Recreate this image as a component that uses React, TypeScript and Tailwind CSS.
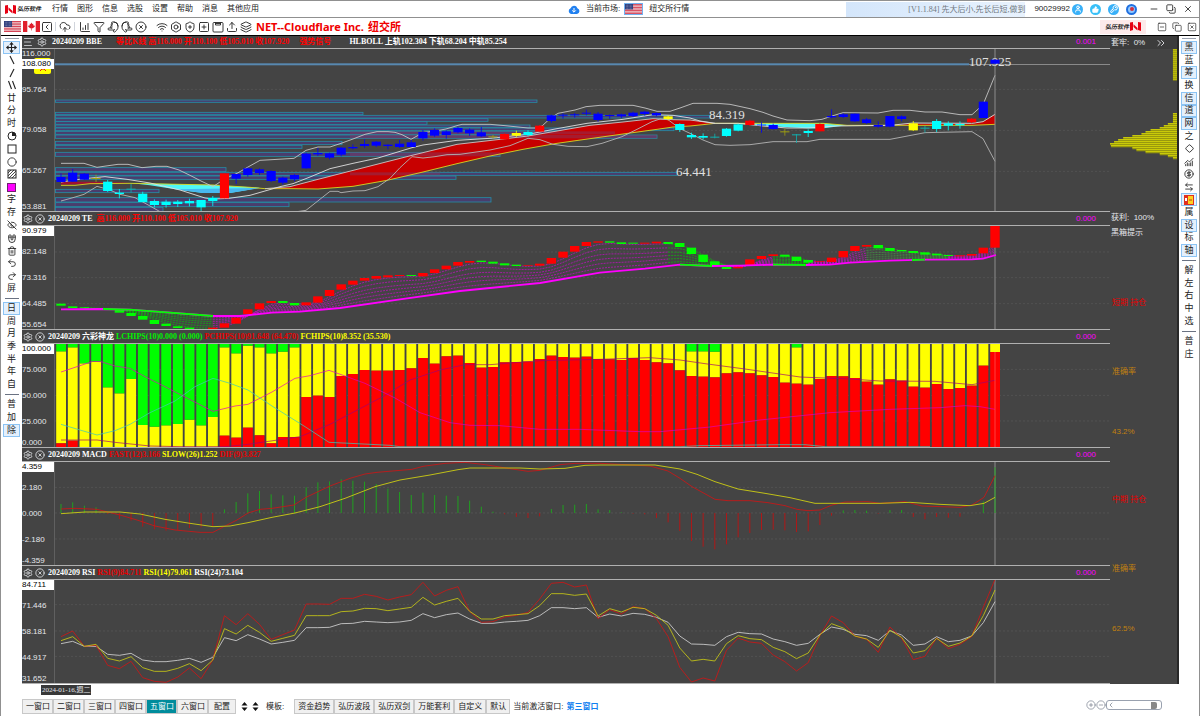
import type { ReactNode } from 'react'
import {
  Bolt, ChartColumnIncreasing, ChevronLeft, ChevronsRight, Circle, CircleDollarSign, CircleX, CloudUpload, Copy,
  Diamond, EyeOff, Funnel, Layers, Magnet, Minus, Move, Pointer, Redo2, Settings, ShieldPlus, Square, SquareChevronLeft,
  SquareMinus, SquarePlus, SquareX, TextAlignStart, Trash2, Undo2, Upload, User, Wifi, X, ChartNoAxesCombined,
  ArrowLeftRight, KeyRound, CirclePlus, CircleMinus, ThumbsUp,
} from 'lucide-react'

const STEP = 11.675
const xAt = (i: number) => 61 + i * STEP

// flat list of x, v pairs -> polyline points (three units per pixel vertically)
const pts = (list: number[]) => {
  const out: string[] = []
  for (let i = 0; i < list.length; i += 2) out.push(`${list[i]},${list[i + 1] / 3}`)
  return out.join(' ')
}
const series = (list: number[]) => list.map((v, i) => `${xAt(i)},${v / 3}`).join(' ')

const colors: Record<string, string> = { b: '#0000ff', c: '#00ffff', r: '#ff0000', y: '#ffff00', o: '#a0a010', t: '#10b0b0', g: '#00ff00' }

/* ---------- data ---------- */

// body top, body bottom, wick top, wick bottom
type Candle = [string, number, number, number, number]
const candles: Candle[] = [
  ['b', 423, 438, 412, 438], ['b', 410, 437, 399, 437], ['b', 413, 431, 411, 431], ['o', 426, 429, 416, 438],
  ['c', 437, 465, 432, 468], ['c', 470, 474, 459, 487], ['t', 458, 461, 444, 470], ['c', 473, 498, 467, 498],
  ['c', 495, 507, 490, 514], ['c', 497, 507, 491, 515], ['c', 497, 504, 492, 513], ['c', 495, 502, 488, 511],
  ['c', 492, 514, 492, 527], ['c', 486, 495, 480, 510], ['r', 412, 487, 412, 487], ['b', 414, 428, 414, 444],
  ['b', 397, 417, 395, 422], ['b', 400, 411, 397, 417], ['b', 405, 435, 403, 438], ['b', 425, 440, 422, 446],
  ['b', 417, 430, 414, 436], ['b', 353, 397, 350, 398], ['b', 351, 355, 336, 360], ['b', 352, 365, 350, 370],
  ['b', 335, 356, 333, 361], ['b', 333, 337, 325, 340], ['b', 324, 330, 310, 336], ['b', 317, 329, 315, 333],
  ['b', 326, 330, 325, 340], ['b', 323, 333, 312, 336], ['b', 319, 333, 312, 333], ['b', 288, 307, 282, 314],
  ['b', 282, 299, 277, 303], ['b', 286, 297, 283, 308], ['b', 276, 289, 273, 292], ['b', 281, 292, 277, 300],
  ['b', 289, 301, 273, 303], ['o', 301, 304, 297, 308], ['r', 294, 310, 292, 310], ['y', 291, 299, 284, 303],
  ['c', 288, 297, 283, 301], ['r', 269, 287, 267, 287], ['b', 238, 255, 236, 260], ['b', 236, 239, 232, 248],
  ['b', 235, 238, 231, 245], ['b', 230, 233, 221, 238], ['b', 233, 252, 228, 257], ['b', 237, 240, 235, 249],
  ['b', 235, 241, 233, 246], ['b', 230, 240, 227, 243], ['b', 227, 234, 224, 239], ['b', 231, 238, 229, 241],
  ['y', 241, 249, 238, 253], ['c', 264, 282, 262, 288], ['c', 297, 304, 290, 309], ['c', 300, 305, 292, 310],
  ['t', 302, 305, 293, 307], ['c', 278, 300, 276, 302], ['c', 265, 284, 263, 286], ['r', 254, 267, 251, 269],
  ['b', 266, 268, 259, 290], ['b', 267, 279, 263, 281], ['o', 286, 289, 278, 299], ['t', 295, 298, 294, 321],
  ['c', 285, 291, 280, 303], ['r', 264, 286, 262, 286], ['b', 240, 244, 220, 247], ['b', 235, 243, 232, 246],
  ['b', 233, 256, 233, 258], ['b', 250, 261, 246, 264], ['b', 267, 272, 256, 275], ['b', 240, 272, 240, 274],
  ['b', 241, 249, 238, 256], ['y', 262, 283, 255, 285], ['t', 275, 278, 270, 290], ['c', 255, 279, 249, 288],
  ['c', 262, 269, 256, 283], ['c', 264, 268, 256, 278], ['r', 248, 259, 246, 262], ['b', 197, 246, 197, 246],
  ['b', 71, 83, 71, 83],
]

// top, bottom, right edge
const priceRanges = [
  [192, 199, 537], [229, 236, 363], [238, 246, 710], [248, 256, 488], [257, 265, 427], [267, 274, 530],
  [276, 284, 674], [286, 295, 615], [297, 307, 657], [316, 326, 342], [328, 337, 302], [349, 361, 500], [395, 407, 226],
  [409, 418, 677], [420, 430, 456], [460, 470, 159], [485, 498, 491], [500, 512, 289], [514, 526, 163],
]

const upperBand = [
  61, 382, 84, 382, 97, 394, 106, 390, 118, 385, 128, 385, 142, 395, 156, 391, 167, 391, 179, 402, 190, 418, 201, 435,
  213, 452, 225, 428, 237, 412, 248, 393, 260, 373, 272, 371, 294, 367, 306, 343, 318, 333, 330, 333, 341, 322,
  353, 309, 365, 295, 377, 287, 388, 287, 395, 289, 402, 296, 411, 310, 423, 290, 435, 285, 446, 279, 458, 268,
  462, 265, 490, 265, 505, 269, 528, 276, 535, 276, 542, 270, 551, 245, 558, 232, 575, 222, 586, 212, 600, 208,
  633, 208, 645, 216, 657, 226, 670, 226, 680, 216, 693, 202, 717, 202, 730, 205, 750, 218, 763, 229, 773, 240,
  787, 252, 810, 254, 822, 250, 832, 240, 843, 230, 878, 231, 893, 223, 910, 223, 925, 228, 942, 228, 960, 236,
  972, 236, 983, 206, 995, 118,
]
const lowerBand = [
  61, 495, 73, 485, 84, 475, 97, 451, 108, 460, 120, 475, 135, 485, 147, 505, 160, 527, 297, 527, 306, 523, 330, 466,
  338, 466, 341, 470, 353, 465, 365, 464, 378, 452, 390, 427, 400, 395, 412, 362, 423, 366, 435, 362, 447, 356,
  460, 355, 490, 342, 510, 329, 528, 307, 540, 311, 553, 325, 568, 331, 587, 332, 602, 322, 622, 302, 637, 280,
  652, 257, 660, 249, 668, 251, 680, 278, 690, 292, 703, 312, 715, 326, 730, 328, 750, 326, 773, 317, 807, 317,
  820, 310, 890, 310, 925, 290, 972, 287, 983, 308, 995, 376,
]
const midBand = [
  61, 438, 84, 428, 105, 422, 127, 430, 150, 441, 180, 462, 205, 486, 213, 489, 229, 487, 250, 478, 280, 452, 293, 443,
  310, 423, 330, 398, 353, 382, 378, 366, 412, 335, 423, 327, 457, 313, 490, 307, 528, 295, 557, 278, 587, 262,
  623, 250, 653, 236, 673, 238, 690, 246, 700, 255, 715, 262, 738, 262, 763, 270, 787, 276, 808, 276, 837, 270,
  890, 268, 913, 261, 972, 262, 983, 257, 995, 235,
]
const fanTop = [
  265, 458, 290, 452, 318, 430, 412, 358, 457, 325, 503, 309, 528, 300, 557, 285, 590, 268, 623, 258, 653, 248,
  673, 251, 690, 252, 715, 262,
]
const fanBottom = [
  265, 458, 290, 458, 318, 459, 353, 451, 387, 433, 423, 408, 457, 383, 490, 360, 523, 340, 557, 322, 590, 308,
  623, 294, 657, 280, 673, 273, 690, 270, 703, 266, 715, 262,
]
const reversed = (list: number[]) => {
  const out: number[] = []
  for (let i = list.length - 2; i >= 0; i -= 2) out.push(list[i], list[i + 1])
  return out
}

const teBars: [string, number, number][] = [
  ['g', 281, 287], ['g', 289, 294], ['g', 292, 295], ['g', 294, 297], ['g', 294, 298], ['g', 298, 308], ['g', 309, 318],
  ['g', 318, 329], ['g', 330, 342], ['g', 341, 348], ['g', 349, 354], ['g', 353, 357], ['g', 357, 357], ['r', 353, 357],
  ['r', 340, 353], ['r', 323, 341], ['r', 298, 312], ['r', 280, 298], ['r', 273, 279], ['g', 273, 279], ['g', 279, 286],
  ['r', 277, 286], ['r', 259, 278], ['r', 240, 258], ['r', 223, 239], ['r', 212, 224], ['r', 204, 212], ['r', 198, 206],
  ['r', 196, 202], ['r', 195, 198], ['g', 195, 198], ['r', 189, 199], ['r', 178, 189], ['r', 167, 178], ['r', 156, 167],
  ['r', 153, 158], ['g', 152, 156], ['g', 155, 161], ['g', 160, 166], ['g', 164, 168], ['r', 166, 168], ['r', 161, 167],
  ['r', 144, 161], ['r', 125, 143], ['r', 108, 125], ['r', 96, 108], ['r', 94, 98], ['g', 94, 98], ['g', 97, 102],
  ['g', 98, 101], ['r', 98, 101], ['r', 95, 100], ['g', 96, 102], ['g', 99, 111], ['g', 113, 132], ['g', 134, 156],
  ['g', 154, 165], ['g', 171, 177], ['r', 170, 175], ['r', 148, 165], ['r', 138, 147], ['r', 133, 138], ['g', 134, 140],
  ['g', 140, 153], ['g', 150, 158], ['r', 154, 156], ['r', 143, 156], ['r', 123, 142], ['r', 108, 123], ['r', 105, 110],
  ['g', 105, 115], ['g', 114, 123], ['g', 120, 124], ['g', 123, 129], ['g', 127, 134], ['g', 131, 136], ['g', 135, 138],
  ['r', 136, 139], ['r', 132, 137], ['r', 113, 130], ['r', 48, 113],
]
const teBase = [
  61, 298, 103, 297, 130, 299, 170, 308, 213, 318, 240, 318, 272, 308, 300, 305, 340, 294, 400, 268, 460, 243, 540, 219,
  600, 188, 645, 176, 680, 164, 712, 168, 740, 167, 773, 164, 806, 165, 830, 164, 850, 158, 890, 152, 925, 149,
  972, 148, 983, 146, 996, 135,
]
const baseAt = (x: number) => {
  for (let i = 2; i < teBase.length; i += 2) {
    if (x <= teBase[i]) {
      const t = (x - teBase[i - 2]) / (teBase[i] - teBase[i - 2])
      return teBase[i - 1] + t * (teBase[i + 1] - teBase[i - 1])
    }
  }
  return teBase[teBase.length - 1]
}
const fanLine = (from: number, to: number, k: number) => {
  const out: string[] = []
  for (let i = from; i <= to; i++) {
    const lag = Math.max(0, i - 1)
    const top = (teBars[lag][1] + teBars[lag][2] + teBars[i][1] + teBars[i][2]) / 4
    const base = baseAt(xAt(i))
    out.push(`${xAt(i)},${(base + (top - base) * k) / 3}`)
  }
  return out.join(' ')
}
const fanParts: [number, number, string][] = [
  [2, 13, '#00d000'], [13, 52, '#e000e0'], [52, 57, '#00d000'], [57, 61, '#e000e0'], [61, 64, '#00d000'],
  [64, 69, '#e000e0'], [69, 76, '#40b040'], [76, 80, '#e000e0'],
]

const redTops = [
  700, 692, 711, 711, 711, 711, 711, 711, 711, 711, 711, 711, 711, 711, 677, 683, 653, 676, 700, 681, 681, 561, 557, 561,
  498, 492, 480, 482, 482, 480, 475, 444, 461, 439, 437, 459, 473, 471, 457, 456, 455, 447, 437, 441, 443, 440, 447,
  448, 450, 444, 450, 457, 460, 481, 498, 500, 502, 490, 487, 490, 496, 501, 518, 521, 524, 507, 498, 499, 504, 515,
  524, 508, 512, 530, 533, 522, 537, 534, 527, 467, 426,
]
const greenBottoms: Record<number, number> = {
  0: 424, 1: 412, 2: 460, 3: 455, 4: 532, 5: 550, 6: 507, 7: 645, 8: 650, 9: 646, 10: 642, 11: 629, 12: 646, 13: 621,
  14: 412, 15: 430, 16: 407, 17: 412, 18: 430, 19: 425, 20: 412, 54: 424, 55: 424, 56: 425, 63: 412,
}
const lChips = [
  61, 486, 73, 474, 93, 454, 101, 455, 115, 468, 130, 475, 145, 500, 165, 530, 183, 558, 213, 604, 235, 588, 248, 583,
  272, 546, 295, 505, 310, 497, 329, 481, 345, 498, 365, 520, 395, 564, 420, 608, 450, 638, 470, 646, 500, 647,
  540, 658, 580, 658, 640, 665, 660, 665, 710, 651, 760, 630, 830, 608, 890, 598, 940, 593, 965, 587, 980, 590, 995, 598,
]
const pChips = [
  61, 643, 80, 660, 97, 675, 115, 662, 130, 643, 150, 608, 175, 573, 195, 530, 213, 505, 230, 520, 248, 540, 272, 588,
  305, 650, 329, 697, 350, 700, 390, 706, 400, 710, 680, 710, 700, 707, 780, 704, 805, 704, 825, 710, 930, 710,
]
const fChips = [
  61, 690, 97, 690, 115, 697, 150, 708, 180, 710, 225, 710, 248, 703, 280, 689, 300, 680, 330, 643, 384, 558, 410, 510,
  440, 480, 465, 464, 490, 464, 540, 452, 600, 448, 650, 443, 680, 450, 705, 461, 745, 477, 800, 501, 850, 507,
  880, 513, 935, 514, 972, 524, 983, 518, 995, 511,
]

const macdBars = [
  192, 187, 197, 202, 222, 237, 242, 260, 268, 272, 270, 264, 262, 258, 208, 186, 160, 153, 163, 166, 167, 142, 127, 124,
  118, 122, 125, 132, 146, 156, 165, 158, 165, 167, 168, 182, 200, 215, 223, 231, 234, 229, 207, 195, 194, 192, 208,
  210, 217, 221, 223, 234, 247, 273, 303, 320, 328, 313, 292, 279, 270, 269, 271, 276, 274, 255, 227, 211, 210, 212,
  221, 210, 210, 231, 238, 231, 233, 230, 219, 184, 82,
]
const macdFast = [
  61, 207, 75, 205, 97, 208, 120, 225, 137, 240, 155, 258, 175, 270, 200, 277, 213, 277, 225, 258, 237, 240, 248, 219,
  260, 208, 272, 205, 294, 195, 306, 172, 330, 138, 350, 115, 365, 102, 377, 97, 412, 88, 423, 79, 445, 70, 465, 67,
  485, 74, 510, 86, 528, 94, 540, 91, 560, 74, 575, 70, 600, 70, 650, 78, 668, 93, 680, 115, 692, 140, 715, 178,
  728, 182, 750, 182, 768, 188, 785, 197, 797, 208, 808, 212, 820, 210, 832, 195, 845, 186, 868, 185, 880, 190,
  905, 185, 922, 198, 960, 202, 972, 195, 984, 172, 995, 107,
]
const macdSlow = [
  61, 221, 85, 216, 120, 216, 140, 222, 165, 238, 190, 250, 213, 260, 230, 258, 248, 248, 272, 232, 295, 219, 320, 200,
  345, 175, 375, 140, 400, 120, 430, 105, 458, 89, 470, 84, 520, 84, 540, 87, 565, 85, 585, 76, 600, 75, 655, 75,
  680, 87, 697, 103, 715, 125, 738, 147, 765, 160, 790, 173, 815, 190, 880, 190, 910, 187, 940, 193, 970, 197,
  984, 190, 995, 172,
]

const rsi24 = [
  611, 604, 619, 619, 643, 646, 640, 660, 665, 665, 661, 655, 667, 652, 593, 602, 584, 597, 612, 607, 601, 563, 563, 562,
  551, 550, 544, 546, 548, 546, 541, 521, 533, 524, 519, 537, 550, 550, 546, 544, 541, 527, 503, 503, 506, 503, 532,
  522, 528, 520, 523, 532, 547, 588, 612, 613, 616, 590, 577, 581, 582, 597, 605, 616, 610, 583, 561, 568, 583, 587,
  601, 572, 585, 616, 612, 590, 605, 601, 588, 548, 485,
]
const rsi14 = [
  602, 590, 619, 613, 655, 663, 650, 683, 694, 694, 685, 671, 692, 660, 566, 582, 556, 577, 604, 595, 586, 527, 527, 527,
  515, 513, 505, 506, 512, 507, 502, 472, 495, 484, 475, 514, 537, 537, 527, 524, 521, 497, 461, 461, 466, 462, 528,
  506, 516, 502, 506, 526, 556, 624, 663, 658, 663, 611, 587, 596, 599, 622, 635, 656, 639, 585, 551, 564, 588, 597,
  622, 571, 592, 639, 632, 595, 619, 609, 588, 527, 450,
]
const rsi9 = [
  590, 573, 619, 616, 676, 686, 664, 713, 724, 727, 711, 684, 716, 660, 527, 554, 521, 553, 598, 584, 570, 492, 492, 493,
  475, 475, 463, 469, 480, 471, 464, 427, 468, 451, 440, 514, 547, 545, 531, 526, 517, 477, 430, 427, 441, 435, 536,
  509, 522, 500, 506, 536, 590, 682, 726, 714, 723, 631, 594, 606, 610, 645, 665, 693, 668, 587, 528, 548, 588, 598,
  637, 561, 594, 659, 649, 594, 626, 613, 590, 502, 418,
]

// row top, bar width for the chip distribution at the right edge
const chipRows = [
  ...Array.from({ length: 16 }, (_, i) => [38 + i * 6, 4]),
  ...Array.from({ length: 5 }, (_, i) => [232 + i * 6, 4]),
  [262, 9], [268, 13], [274, 17], [280, 26], [286, 31], [292, 35], [298, 44], [304, 53], [310, 58], [316, 62], [322, 66],
  [328, 65], [334, 44], [340, 40], [346, 31], [352, 17], [358, 9], [364, 4],
]

/* ---------- charts ---------- */

function Grid({ rows }: { rows: number[] }) {
  return (
    <>
      {rows.map((v) => (
        <line key={v} x1="55" x2="1110" y1={v / 3} y2={v / 3} stroke="#565656" strokeDasharray="2 2" strokeWidth="0.8" />
      ))}
    </>
  )
}

function PriceChart() {
  return (
    <>
      <Grid rows={[160, 283, 406]} />
      {priceRanges.map(([top, bottom, right]) => (
        <rect key={top} x="55.5" y={top / 3} width={right - 55.5} height={(bottom - top) / 3} fill="#4c3c78" fillOpacity="0.8" stroke="#2490a8" strokeWidth="0.8" />
      ))}
      <rect x="55" y="27.3" width="914" height="2" fill="#5888b0" />
      <line x1="969" x2="1110" y1="28.5" y2="28.5" stroke="#8a8a8a" />
      <polygon points={pts([61, 437, 100, 437, 130, 440, 100, 444, 61, 446])} fill="#a01030" />
      <polygon points={pts([...fanTop, ...reversed(fanBottom)])} fill="#c80000" />
      {[[286, 295, 615], [297, 307, 657], [349, 361, 500], [409, 418, 440]].map(([top, bottom, right]) => (
        <rect key={top} x="350" y={top / 3} width={right - 350} height={(bottom - top) / 3} fill="#7c3c68" fillOpacity="0.45" />
      ))}
      <polygon points={pts([130, 441, 213, 447, 260, 455, 230, 471, 203, 471, 180, 462, 150, 448])} fill="#50f8f8" />
      <polygon points={pts([175, 460, 260, 456, 230, 471, 203, 471])} fill="#48b8f0" />
      <polygon points={pts([727, 261, 823, 262, 847, 268, 820, 278, 807, 277, 787, 274, 760, 268])} fill="#50f8f8" />
      <polygon points={pts([893, 268, 913, 263, 972, 264, 983, 257, 995, 235, 995, 266])} fill="#c80000" />
      <g fill="none" strokeWidth="0.9">
        <polyline points={pts([61, 448, 75, 448, 90, 443, 130, 442, 213, 447, 250, 454, ...fanBottom, 823, 262, 847, 268, 972, 268, 995, 265])} stroke="#d8d820" />
        <polyline points={pts(fanTop)} stroke="#c8c8c8" />
        <polyline points={pts(upperBand)} stroke="#c4c4c4" />
        <polyline points={pts(lowerBand)} stroke="#b4b4b4" />
        <polyline points={pts(midBand)} stroke="#e0e0e0" />
      </g>
      <line x1="995" x2="995" y1="13" y2="176" stroke="#8c8c8c" />
      <g fill="#e0e0e0" fontFamily="Liberation Serif, serif" fontSize="13">
        <text x="969" y="30">107.925</text>
        <text x="709" y="83">84.319</text>
        <text x="676" y="140">64.441</text>
      </g>
      {candles.map(([c, top, bottom, high, low], i) => (
        <g key={i} fill={colors[c]}>
          <rect x={xAt(i) - 0.5} y={high / 3} width="1" height={(low - high) / 3} fillOpacity="0.8" />
          <rect x={xAt(i) - 4.6} y={top / 3} width="9.2" height={(bottom - top) / 3} />
        </g>
      ))}
    </>
  )
}

function TeChart() {
  return (
    <>
      <Grid rows={[126, 203, 281]} />
      {fanParts.map(([from, to, stroke]) =>
        [0.15, 0.3, 0.45, 0.6, 0.78, 0.95].map((k) => (
          <polyline key={`${from}-${k}`} points={fanLine(from, to, k)} fill="none" stroke={stroke} strokeWidth="0.8" strokeOpacity="0.75" strokeDasharray="2 1" />
        ))
      )}
      <line x1="995" x2="995" y1="16" y2="119" stroke="#8c8c8c" />
      {teBars.map(([c, top, bottom], i) => (
        <rect key={i} x={xAt(i) - 4.7} y={top / 3} width="9.4" height={(bottom - top) / 3} fill={colors[c]} />
      ))}
      <polyline points={pts(teBase)} fill="none" stroke="#ff00ff" strokeWidth="1.8" />
      {[[103, 297, 130, 299, 170, 308, 213, 318], [680, 164, 712, 168], [773, 164, 806, 165], [912, 150, 925, 149]].map((seg) => (
        <polyline key={seg[0]} points={pts(seg)} fill="none" stroke="#00ff00" strokeWidth="1.8" />
      ))}
    </>
  )
}

function ChipsChart() {
  return (
    <>
      <Grid rows={[478, 556, 633]} />
      {redTops.map((red, i) => {
        const x = xAt(i) - 4.8
        const green = greenBottoms[i] ?? 400
        return (
          <g key={i}>
            <rect x={x} y={green / 3} width="9.8" height={(red - green) / 3} fill="#ffff00" />
            {green > 400 && <rect x={x} y="134" width="9.8" height={(green - 402) / 3} fill="#00ff00" />}
            {red < 711 && <rect x={x} y={red / 3} width="9.8" height={(711 - red) / 3} fill="#ff0000" />}
          </g>
        )
      })}
      <g fill="none" strokeWidth="0.9">
        <polyline points={pts(fChips)} stroke="#a00070" strokeOpacity="0.75" />
        <polyline points={pts(lChips)} stroke="#e000c0" strokeOpacity="0.75" />
        <polyline points={pts(pChips)} stroke="#40c8b8" strokeOpacity="0.8" />
      </g>
      <line x1="995" x2="995" y1="142" y2="237" stroke="#ff5050" strokeWidth="0.8" />
    </>
  )
}

function MacdChart() {
  return (
    <>
      <Grid rows={[142, 219, 297]} />
      <line x1="995" x2="995" y1="22" y2="125" stroke="#8c8c8c" />
      {macdBars.map((v, i) => (
        <rect key={i} x={xAt(i) - 0.5} y={Math.min(v, 219) / 3} width="1" height={Math.abs(v - 219) / 3} fill={v < 219 ? '#20a020' : '#b01818'} />
      ))}
      <polyline points={pts(macdFast)} fill="none" stroke="#c41818" strokeWidth="0.9" />
      <polyline points={pts(macdSlow)} fill="none" stroke="#c0c018" strokeWidth="1" />
    </>
  )
}

function RsiChart() {
  return (
    <>
      <Grid rows={[494, 573, 649]} />
      <line x1="995" x2="995" y1="139" y2="243" stroke="#8c8c8c" />
      <g fill="none" strokeWidth="0.9">
        <polyline points={series(rsi24)} stroke="#c8c8c8" />
        <polyline points={series(rsi9)} stroke="#c41818" />
        <polyline points={series(rsi14)} stroke="#c0c018" />
      </g>
    </>
  )
}

/* ---------- small parts ---------- */

function Logo() {
  return (
    <svg viewBox="0 0 11 9" className="h-[9px] w-[11px]" fill="#e60012" aria-hidden="true">
      <path d="M0 .5 3 0v8L0 9ZM8 0l3 .5V9L8 8ZM3.5 2.2 7.5 6v2.5L3.5 5Z" />
    </svg>
  )
}

function UsFlag() {
  return (
    <svg viewBox="0 0 19 13" preserveAspectRatio="none" className="h-full w-full" aria-hidden="true">
      <rect width="19" height="13" fill="#f4e6e8" />
      {[0, 2, 4, 6, 8, 10, 12].map((y) => <rect key={y} y={y} width="19" height="1" fill="#d0283c" />)}
      <rect width="9" height="7" fill="#2c3c7c" />
      {[1.5, 3.5, 5.5].map((y) => <path key={y} d={`M1 ${y}h7`} stroke="#fff" strokeWidth=".6" strokeDasharray=".6 1" />)}
    </svg>
  )
}

function CanadaFlag() {
  return (
    <svg viewBox="0 0 17 11" className="h-[11px] w-[17px]" aria-hidden="true">
      <rect width="17" height="11" fill="#fff" />
      <path d="M0 0h4.3v11H0zM12.7 0H17v11h-4.3zM8.5 1.5l.9 1.6 1-.4-.4 2 1-.6.9 1.5-2 1.6H8.8V9.5h-.6V7.2H7.1L5.1 5.6 6 4.100l1 .6-.4-2 1 .4Z" fill="#e0202c" />
    </svg>
  )
}

function Sep() {
  return <span className="h-[9px] w-px bg-gray-300" />
}

type RailItem = { label: string; icon?: ReactNode; active?: boolean }

function RailGroup({ items, className }: { items: RailItem[]; className: string }) {
  return (
    <div className={`flex w-full flex-col ${className}`}>
      {items.map((item) => (
        <button
          key={item.label}
          aria-label={item.label}
          className={`flex min-h-0 flex-1 items-center justify-center border text-[9px] leading-none ${item.active ? 'border-[#8cc4f4] bg-[#e4f0fc]' : 'border-transparent'}`}
        >
          {item.icon ?? item.label}
        </button>
      ))}
    </div>
  )
}

function RailLine() {
  return <div className="my-[3px] h-px w-[14px] shrink-0 bg-gray-500" />
}

const rail = { size: 10, strokeWidth: 2 }
const stroke = (d: string) => (
  <svg viewBox="0 0 10 10" className="h-[10px] w-[10px]" fill="none" stroke="currentColor" strokeWidth="1.100">
    <path d={d} />
  </svg>
)

const drawTools: RailItem[] = [
  { label: '移动', icon: <Move size={11} strokeWidth={2.4} />, active: true },
  { label: '直线', icon: stroke('M3 1l4 8') },
  { label: '射线', icon: stroke('M7 1L3 9') },
  { label: '平行线', icon: stroke('M1.500 1l3 8M5.500 1l3 8') },
  { label: '廿' }, { label: '分' }, { label: '时' },
  { label: '周期尺', icon: <svg viewBox="0 0 10 10" className="h-[10px] w-[10px]"><circle cx="5" cy="5" r="4" fill="none" stroke="#222" /><path d="M5 5V1a4 4 0 0 1 4 4Z" fill="#222" /></svg> },
  { label: '矩形', icon: <svg viewBox="0 0 10 10" className="h-[10px] w-[10px]" stroke="#222" fill="none"><rect x="1" y="1" width="8" height="8" /></svg> },
  { label: '圆形', icon: <Circle {...rail} /> },
  { label: '填充', icon: <svg viewBox="0 0 10 10" className="h-[10px] w-[10px]" stroke="#222" fill="none"><rect x="1" y="1" width="8" height="8" /><path d="M1 4l3-3M1 7l6-6M2 9l7-7M5 9l4-4" strokeWidth=".8" /></svg> },
  { label: '颜色', icon: <span className="h-[9px] w-[9px] border border-[#702070] bg-[#ff00ff]" /> },
  { label: '字' }, { label: '存' },
  { label: '隐藏', icon: <EyeOff {...rail} /> },
  { label: '磁吸', icon: <Magnet {...rail} className="rotate-135" /> },
  { label: '删除', icon: <Trash2 {...rail} /> },
  { label: '撤销', icon: <Undo2 {...rail} /> },
  { label: '重做', icon: <Redo2 {...rail} /> },
  { label: '屏' },
]
const periods: RailItem[] = ['日', '周', '月', '季', '半', '年', '自'].map((label) => ({ label, active: label === '日' }))
const adjust: RailItem[] = ['普', '加', '除'].map((label) => ({ label, active: label === '除' }))

const overlays: RailItem[] = [
  { label: '黑', active: true }, { label: '蓝' }, { label: '筹', active: true }, { label: '换' },
  { label: '信', active: true }, { label: '道', active: true }, { label: '网', active: true }, { label: '之' },
  { label: '菱形', icon: <Diamond size={9} strokeWidth={2.4} /> },
  { label: '走势', icon: <ChartNoAxesCombined {...rail} /> },
  { label: '货币', icon: <CircleDollarSign {...rail} /> },
  { label: '对比', icon: <ArrowLeftRight {...rail} /> },
  { label: '卡片', icon: <svg viewBox="0 0 10 10" className="h-[10px] w-[10px]"><rect width="10" height="10" fill="#e03020" /><rect x="4" y="1" width="5" height="8" fill="#ffd020" /><path d="M1 3h2v3H1z" fill="#fff" /><path d="M5 5h3" stroke="#c04010" /></svg>, active: true },
  { label: '属' }, { label: '设', active: true }, { label: '标' }, { label: '轴', active: true },
]
const sides: RailItem[] = ['解', '左', '右', '中', '选'].map((label) => ({ label }))
const extras: RailItem[] = ['普', '庄'].map((label) => ({ label }))

function PanelHeader({ first, children, value }: { first?: boolean; children: ReactNode; value: string }) {
  return (
    <div className={`flex items-center border-b border-[#b0b0b0] pl-px leading-none whitespace-nowrap ${first ? 'h-[13px]' : 'h-[15px] border-t'}`}>
      <span className={`flex items-center gap-[2px] text-gray-200 ${first ? 'pr-[5px]' : 'pr-[3px]'}`}>
        {first && <button aria-label="列表"><TextAlignStart size={12} strokeWidth={1.5} /></button>}
        <button aria-label="参数"><Settings size={10} strokeWidth={2} /></button>
        {!first && <button aria-label="关闭"><CircleX size={10} strokeWidth={2} /></button>}
      </span>
      <div className="flex flex-1 gap-[2px] font-['Liberation_Serif','Noto_Sans_CJK_SC',serif] text-[8px] font-bold text-white">{children}</div>
      <span className="pr-[14px] text-[#ff00ff]">{value}</span>
    </div>
  )
}

function Axis({ labels }: { labels: string[] }) {
  const gaps = ['', 'mt-[11px]', 'mt-[16px]', 'mt-[16px]', 'mt-[11px]']
  return (
    <div className="flex w-[33px] shrink-0 flex-col border-r border-[#606060] text-[8px] text-gray-200">
      {labels.map((label, i) => (
        <span key={label} className={`leading-[10px] ${gaps[i]} ${i === 0 ? 'bg-white text-black' : ''}`}>{label}</span>
      ))}
    </div>
  )
}

function Plot({ viewBox, children }: { viewBox: string; children: ReactNode }) {
  return (
    <svg viewBox={viewBox} preserveAspectRatio="none" className="block h-full w-full min-w-0 flex-1 overflow-hidden">
      {children}
    </svg>
  )
}

const ohlc = '高116.000 开110.100 低105.010 收107.920'
const menus = ['行情', '图形', '信息', '选股', '设置', '帮助', '消息', '其他应用']
const windows = ['一窗口', '二窗口', '三窗口', '四窗口', '五窗口', '六窗口', '配置']
const templates = ['资金趋势', '弘历波段', '弘历双剑', '万能套利', '自定义', '默认']
const tool = { size: 12, strokeWidth: 1.8 }

export default function App() {
  return (
    <div className="flex min-h-screen flex-col border-x border-t border-[#909090] bg-white font-['Liberation_Sans','Noto_Sans_CJK_SC',sans-serif] text-[8px] leading-none text-[#222]">
      {/* Title bar */}
      <header className="flex h-[17px] items-center border-b border-[#909090] whitespace-nowrap">
        <div className="flex w-[47%] shrink-0 items-center">
          <div className="flex w-[51px] items-center gap-px pl-1">
            <Logo />
            <span className="text-[6px] font-bold italic">弘历软件</span>
          </div>
          <nav className="flex gap-[9px]">
            {menus.map((m) => <a key={m} href="#">{m}</a>)}
          </nav>
        </div>
        <div className="flex flex-1 items-center pl-1">
          <svg viewBox="0 0 12 9" className="mr-[6px] h-[9px] w-[12px]" aria-hidden="true">
            <path d="M3 9a3 3 0 0 1-.4-5.700A3.600 3.600 0 0 1 9.400 3.200 3 3 0 0 1 9 9Z" fill="#2080f0" />
            <path d="M6 3v4M4.200 5.400 6 7.200l1.800-1.800" stroke="#fff" fill="none" />
          </svg>
          <span>当前市场:</span>
          <span className="mr-[6px] ml-[4px] h-[12px] w-[19px] border border-[#70b0f0]"><UsFlag /></span>
          <span>纽交所行情</span>
        </div>
        <div className="flex items-center">
          <div className="flex h-[15px] w-[179px] justify-end bg-linear-to-r from-[#d4e6fb] to-[#e8f2fd] font-['Liberation_Serif','Noto_Sans_CJK_SC',serif] text-[8px] leading-[15px] text-[#707880]">
            [V1.1.84] 先大后小,先长后短,做到
          </div>
          <span className="mr-[2px] ml-[9px]">90029992</span>
          <div className="flex gap-[7px] text-white">
            <button aria-label="用户" className="flex h-[11px] w-[11px] items-center justify-center rounded-full bg-[#38b0f8]"><User size={8} strokeWidth={3} /></button>
            <button aria-label="点赞" className="flex h-[11px] w-[11px] items-center justify-center rounded-full bg-[#38c0f8]"><ThumbsUp size={7} fill="#fff" /></button>
            <button aria-label="密钥" className="flex h-[11px] w-[11px] items-center justify-center rounded-full bg-[#38b0f8]"><KeyRound size={8} strokeWidth={3} /></button>
            <button aria-label="浏览器" className="flex h-[11px] w-[11px] items-center justify-center rounded-full border-2 border-[#2070e0] bg-[#90c8ff]"><span className="h-[4px] w-[4px] rounded-full bg-[#d03040]" /></button>
          </div>
          <div className="mr-[6px] ml-[12px] flex gap-[7px]">
            <button aria-label="最小化"><Minus size={10} /></button>
            <button aria-label="还原"><Copy size={10} className="-scale-x-100 rotate-90" /></button>
            <button aria-label="关闭"><X size={10} /></button>
          </div>
        </div>
      </header>

      {/* Toolbar */}
      <div className="flex h-[18px] items-center justify-between border-b border-black whitespace-nowrap">
        <div className="flex items-center gap-[2px] pl-[3px]">
          <span className="h-[11px] w-[17px]"><UsFlag /></span>
          <CanadaFlag />
          <button aria-label="返回" className="-ml-px"><SquareChevronLeft {...tool} /></button>
          <div className="flex items-center gap-[3px]">
            <Sep />
            <button aria-label="上传"><CloudUpload {...tool} /></button>
            <Sep />
          </div>
          <div className="ml-[2px] flex items-center gap-[2px]">
            <button aria-label="统计"><ChartColumnIncreasing {...tool} /></button>
            <button aria-label="筛选"><Funnel {...tool} /></button>
            <button aria-label="上一个"><Pointer {...tool} className="-rotate-90" /></button>
            <button aria-label="下一个"><Pointer {...tool} className="-scale-x-100 rotate-90" /></button>
            <button aria-label="取消"><CircleX {...tool} /></button>
            <span className="px-px"><Sep /></span>
            <button aria-label="网络" className="ml-[3px]"><Wifi {...tool} /></button>
            <button aria-label="设置"><Bolt {...tool} /></button>
            <button aria-label="安全"><ShieldPlus {...tool} /></button>
            <button aria-label="新增"><SquarePlus {...tool} /></button>
            <button aria-label="保存">
              <svg viewBox="0 0 12 12" className="h-[12px] w-[12px]" fill="none" stroke="currentColor" strokeWidth=".9"><rect x="1" y="1.500" width="10" height="9.500" rx="1" /><path d="M3.500 1.500v2.500h5v-2.500M3.500 2.500h5" /></svg>
            </button>
            <button aria-label="导出"><Upload {...tool} /></button>
            <button aria-label="图层"><Layers {...tool} /></button>
          </div>
          <h1 className="ml-[2px] flex gap-[4px] font-['Noto_Sans','Noto_Sans_CJK_SC',sans-serif] text-[11px] font-bold text-[#f00000]">
            <span>NET--Cloudflare Inc.</span>
            <span>纽交所</span>
          </h1>
        </div>
        <div className="flex items-center gap-[5px] pr-[2px]">
          <div className="flex h-[14px] w-[46px] items-center justify-center gap-px bg-[#fdeaea]">
            <span className="text-[6px] font-bold italic">弘历软件</span>
            <Logo />
          </div>
          <span className="w-px" />
          <button aria-label="最小化窗口"><SquareMinus size={10} strokeWidth={1.6} /></button>
          <button aria-label="还原窗口"><Copy size={10} strokeWidth={1.6} /></button>
          <button aria-label="关闭窗口"><SquareX size={10} strokeWidth={1.6} /></button>
        </div>
      </div>

      <div className="flex">
        {/* Left rail */}
        <aside className="flex w-[21px] shrink-0 flex-col items-center px-[2px] pt-[2px]">
          <div className="mb-[2px] h-px w-[14px] bg-gray-400" />
          <RailGroup items={drawTools} className="h-[254px]" />
          <RailLine />
          <RailGroup items={periods} className="h-[89px]" />
          <RailLine />
          <RailGroup items={adjust} className="h-[39px]" />
        </aside>

        {/* Chart stack */}
        <main className="min-w-0 flex-1 bg-[#444]">
          <section>
            <PanelHeader first value="0.001">
              <span>20240209 BBE</span>
              <span className="ml-[12px] text-[#ff0000]">等比K线 {ohlc}</span>
              <span className="ml-[8px] text-[#ff0000]">强势信号</span>
              <span className="ml-[16px]">HLBOLL 上轨102.304 下轨68.204 中轨85.254</span>
            </PanelHeader>
            <div className="flex h-[162px]">
              <div className="relative flex w-[33px] shrink-0 flex-col border-r border-[#606060] text-[8px] leading-[10px] text-gray-200">
                <span>116.000</span>
                <span className="absolute top-[9px] left-[12px] flex h-[16px] w-[17px] items-end justify-center rounded-[2px] bg-[#ffff00]">
                  <svg viewBox="0 0 8 5" className="h-[7px] w-[8px]" fill="none" stroke="#e02020"><path d="M1 3l2-2h2l2 2" /></svg>
                </span>
                <span className="relative bg-white text-black">108.080</span>
                <span className="mt-[16px]">95.764</span>
                <span className="mt-[30px]">79.058</span>
                <span className="mt-[31px]">65.267</span>
                <span className="mt-[26px]">53.881</span>
              </div>
              <Plot viewBox="55 13 1055 162"><PriceChart /></Plot>
            </div>
          </section>
          <section>
            <PanelHeader value="0.000">
              <span>20240209 TE</span>
              <span className="ml-[2px] text-[#ff0000]">{ohlc}</span>
            </PanelHeader>
            <div className="flex h-[103px]">
              <Axis labels={['90.979', '82.148', '73.316', '64.485', '55.654']} />
              <Plot viewBox="55 16 1055 103"><TeChart /></Plot>
            </div>
          </section>
          <section>
            <PanelHeader value="0.000">
              <span>20240209 六彩神龙</span>
              <span className="text-[#00f000]">LCHIPS(10)0.000 (0.000)</span>
              <span className="text-[#e80000]">PCHIPS(10)91.648 (64.470)</span>
              <span className="text-[#ffff00]">FCHIPS(10)8.352 (35.530)</span>
            </PanelHeader>
            <div className="flex h-[103px]">
              <Axis labels={['100.000', '75.000', '50.000', '25.000', '0.000']} />
              <Plot viewBox="55 134 1055 103"><ChipsChart /></Plot>
            </div>
          </section>
          <section>
            <PanelHeader value="0.000">
              <span>20240209 MACD</span>
              <span className="text-[#e80000]">FAST(12)3.166</span>
              <span className="text-[#ffff00]">SLOW(26)1.252</span>
              <span className="text-[#e80000]">DIF(9)3.827</span>
            </PanelHeader>
            <div className="flex h-[103px]">
              <Axis labels={['4.359', '2.180', '0.000', '-2.180', '-4.359']} />
              <Plot viewBox="55 22 1055 103"><MacdChart /></Plot>
            </div>
          </section>
          <section className="border-b border-[#b0b0b0]">
            <PanelHeader value="0.000">
              <span>20240209 RSI</span>
              <span className="text-[#e80000]">RSI(9)84.711</span>
              <span className="text-[#ffff00]">RSI(14)79.061</span>
              <span>RSI(24)73.104</span>
            </PanelHeader>
            <div className="flex h-[103px]">
              <Axis labels={['84.711', '71.446', '58.181', '44.917', '31.652']} />
              <Plot viewBox="55 140 1055 103"><RsiChart /></Plot>
            </div>
          </section>
        </main>

        {/* Signal column */}
        <aside className="flex w-[69px] shrink-0 flex-col border-r-2 border-[#282828] bg-[#444] text-[8px] leading-[10px] text-gray-200">
          <div className="flex h-[13px] items-center justify-between bg-[#3c3c3c] pr-[10px] pl-px">
            <span>套牢:&nbsp; 0%</span>
            <button aria-label="展开"><ChevronsRight size={12} strokeWidth={1.8} /></button>
          </div>
          <svg viewBox="0 13 66 162" preserveAspectRatio="none" className="h-[162px] w-full">
            {chipRows.map(([y, w]) => (
              <g key={y}>
                <rect x={66 - w} y={y / 3} width={w} height="2" fill="#8c8c10" />
                <rect x={66 - w} y={y / 3} width={w} height="0.8" fill="#f0f000" />
              </g>
            ))}
          </svg>
          <div className="flex flex-col pl-px">
            <span className="mt-[2px]">获利:&nbsp; 100%</span>
            <span className="mt-[5px]">黑箱提示</span>
            <span className="mt-[60px] pl-px text-[#e80000]">短期 持仓</span>
            <span className="mt-[59px] pl-px text-[#c08010]">准确率</span>
            <span className="mt-[50px] pl-px text-[#c08010]">43.2%</span>
            <span className="mt-[58px] pl-px text-[#e80000]">中期 持仓</span>
            <span className="mt-[59px] pl-px text-[#c08010]">准确率</span>
            <span className="mt-[50px] pl-px text-[#c08010]">62.5%</span>
          </div>
        </aside>

        {/* Right rail */}
        <aside className="flex w-[20px] shrink-0 flex-col items-center px-[2px] pt-[2px]">
          <div className="mb-[2px] h-px w-[14px] bg-gray-400" />
          <RailGroup items={overlays} className="h-[216px]" />
          <RailLine />
          <RailGroup items={sides} className="h-[64px]" />
          <RailLine />
          <RailGroup items={extras} className="h-[26px]" />
        </aside>
      </div>

      {/* Date cursor */}
      <div className="flex h-[14px] items-start pt-px pl-[40px]">
        <span className="h-[10px] bg-[#383838] px-px font-['Liberation_Serif','Noto_Sans_CJK_TC',serif] text-[7px] leading-[10px] whitespace-nowrap text-gray-200">2024-01-16,週二</span>
      </div>

      {/* Window bar */}
      <footer className="flex h-[17px] items-center justify-between pr-[37px] pl-[21px] whitespace-nowrap">
        <div className="flex items-center">
          <div className="flex">
            {windows.map((w) => (
              <button key={w} className={`h-[15px] border border-[#c8c8c8] px-[3px] ${w === '五窗口' ? 'bg-[#008c9c] text-white' : 'bg-[#f0f0f0]'} ${w === '配置' ? 'w-[28px]' : 'w-[31px]'}`}>{w}</button>
            ))}
          </div>
          <div className="mx-[3px] flex">
            {['上下调整', '切换顺序'].map((label) => (
              <button key={label} aria-label={label} className="px-[2px]">
                <svg viewBox="0 0 7 9" className="h-[9px] w-[7px]" fill="#111"><path d="M.500 3.500h6l-3-3.500ZM.500 5.500h6l-3 3.500Z" /></svg>
              </button>
            ))}
          </div>
          <span className="mr-[10px] ml-[2px]">模板:</span>
          <div className="flex">
            {templates.map((t) => (
              <button key={t} className="h-[15px] border border-[#c8c8c8] bg-[#f0f0f0] px-[3px]">{t}</button>
            ))}
          </div>
          <span className="ml-[3px]">当前激活窗口:</span>
          <a href="#" className="ml-[3px] font-bold text-[#1080f0]">第三窗口</a>
        </div>
        <div className="mb-[3px] flex items-center text-gray-500">
          <button aria-label="放大"><CirclePlus size={10} strokeWidth={1.5} /></button>
          <button aria-label="缩小"><CircleMinus size={10} strokeWidth={1.5} /></button>
          <div className="flex h-[10px] w-[56px] items-center rounded-[3px] border border-gray-400 pr-[4px]">
            <ChevronLeft size={8} />
            <input
              type="range"
              aria-label="缩放"
              defaultValue={100}
              className="h-[8px] min-w-0 flex-1 appearance-none bg-transparent [&::-webkit-slider-thumb]:h-[7px] [&::-webkit-slider-thumb]:w-[6px] [&::-webkit-slider-thumb]:appearance-none [&::-webkit-slider-thumb]:rounded-r-[2px] [&::-webkit-slider-thumb]:bg-[#888]"
            />
          </div>
        </div>
      </footer>
    </div>
  )
}
